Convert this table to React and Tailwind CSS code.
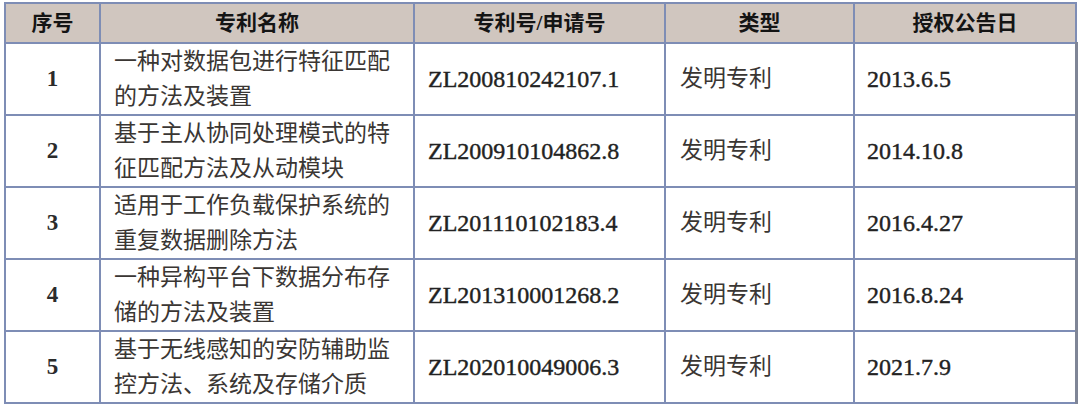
import React from "react";

const patents = [
  { no: "1", name: ["一种对数据包进行特征匹配", "的方法及装置"], code: "ZL200810242107.1", type: "发明专利", date: "2013.6.5" },
  { no: "2", name: ["基于主从协同处理模式的特", "征匹配方法及从动模块"], code: "ZL200910104862.8", type: "发明专利", date: "2014.10.8" },
  { no: "3", name: ["适用于工作负载保护系统的", "重复数据删除方法"], code: "ZL201110102183.4", type: "发明专利", date: "2016.4.27" },
  { no: "4", name: ["一种异构平台下数据分布存", "储的方法及装置"], code: "ZL201310001268.2", type: "发明专利", date: "2016.8.24" },
  { no: "5", name: ["基于无线感知的安防辅助监", "控方法、系统及存储介质"], code: "ZL202010049006.3", type: "发明专利", date: "2021.7.9" },
];

const font = { fontFamily: '"Liberation Serif", "Noto Sans CJK SC", serif' };

function App() {
  return (
    <div className="w-[1080px] h-[405px] bg-white pt-[2px] pl-[4px] overflow-hidden" style={font}>
      <table className="border-collapse table-fixed w-[1071px]">
        <colgroup>
          <col className="w-[95px]" />
          <col className="w-[314px]" />
          <col className="w-[251px]" />
          <col className="w-[189px]" />
          <col className="w-[222px]" />
        </colgroup>
        <thead>
          <tr className="h-[40px] bg-[#d0c6bf]">
            {["序号", "专利名称", "专利号/申请号", "类型", "授权公告日"].map((h) => (
              <th
                key={h}
                className="border-2 border-[#7e8db5] text-center text-[21px] font-bold text-[#141414] leading-none"
              >
                {h}
              </th>
            ))}
          </tr>
        </thead>
        <tbody>
          {patents.map((p) => (
            <tr key={p.no} className="h-[72px]">
              <td className="border-2 border-[#7e8db5] text-center text-[23px] font-bold text-[#2b2b2b]">
                {p.no}
              </td>
              <td className="border-2 border-[#7e8db5] pl-[13px] text-[23px] leading-[35px] text-[#3a3633]">
                <div>{p.name[0]}</div>
                <div>{p.name[1]}</div>
              </td>
              <td className="border-2 border-[#7e8db5] pl-[13px] text-[24px] text-[#222] [-webkit-text-stroke:0.4px_#222]">
                {p.code}
              </td>
              <td className="border-2 border-[#7e8db5] pl-[14px] text-[23px] text-[#3a3633]">
                {p.type}
              </td>
              <td className="border-2 border-[#7e8db5] border-r-[3px] border-r-[#7f8596] pl-[12px] text-[24px] text-[#222] [-webkit-text-stroke:0.4px_#222]">
                {p.date}
              </td>
            </tr>
          ))}
        </tbody>
      </table>
    </div>
  );
}

export default App;
